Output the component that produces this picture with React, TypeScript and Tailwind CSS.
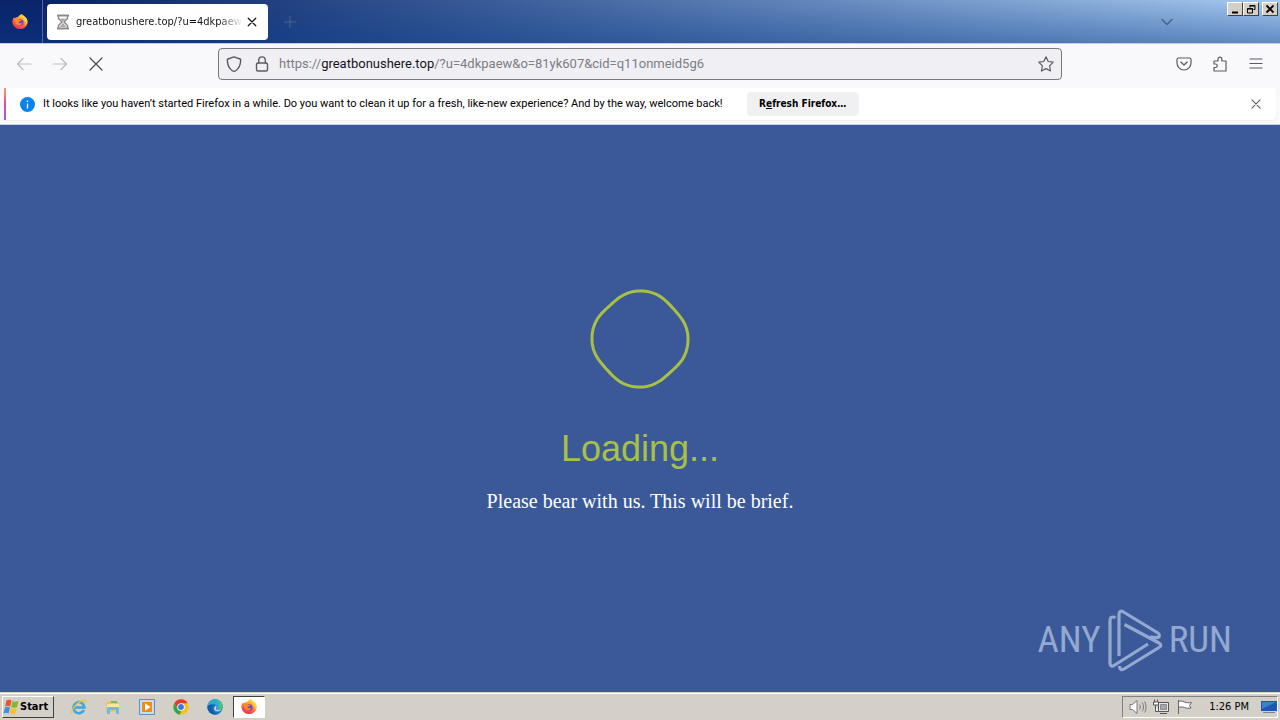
import type { ReactNode } from "react";

const FIREFOX_URL = {
  scheme: "https://",
  host: "greatbonushere.top",
  path: "/?u=4dkpaew&o=81yk607&cid=q11onmeid5g6",
};

// Closed wavy ring: four soft bulges with nearly straight stretches between
function ringPath(cx: number, cy: number) {
  const points: string[] = [];
  for (let deg = 0; deg < 360; deg += 3) {
    const t = (deg * Math.PI) / 180;
    const wave = t - 0.05;
    const r = 46.8 + 1.5 * Math.cos(4 * wave) - 0.25 * Math.cos(8 * wave);
    points.push(
      `${(cx + r * Math.cos(t)).toFixed(2)} ${(cy + r * Math.sin(t)).toFixed(2)}`
    );
  }
  return `M${points.join("L")}Z`;
}

function FirefoxIcon({ id }: { id: string }) {
  return (
    <svg className="size-4" viewBox="0 0 16 16" aria-hidden="true">
      <defs>
        <linearGradient id={id} x1="0.8" y1="0" x2="0.3" y2="1">
          <stop offset="0" stopColor="#fff04a" />
          <stop offset="0.35" stopColor="#ffa62b" />
          <stop offset="0.7" stopColor="#ff5a3d" />
          <stop offset="1" stopColor="#f0285a" />
        </linearGradient>
      </defs>
      <path
        d="M10.300 0c-.4 1 .2 1.900 1.200 2.700 .4-.2.900 0 1.400.4 1.900 1.300 2.800 3.300 2.800 5.300A7.700 7.500 0 0 1 .4 8.500C.3 6.500 1 4.600 2.200 3.300l.3 1.300 1-.9c.8-.5 1.500-.6 2.300-.5C6.800 1.600 8.500.5 10.300 0z"
        fill={`url(#${id})`}
      />
      <circle cx="8.300" cy="8.400" r="3.200" fill="#7a3fd0" />
      <path
        d="M2.800 5.600c1.700-.9 3.200-.6 4.600.4l2-.3c-.2 1-1 1.500-2.200 1.700-.8.2-.9.900-.4 1.500.9.8 2.300.2 3.400.3-.6 1.800-3 2.600-5 1.500C3.300 9.700 2.500 7.600 2.800 5.600z"
        fill="#ff8a1f"
      />
      <path
        d="M10 3c2.300 1.200 3 3.500 2.500 5.500 1-.6 1.300-1.500 1.300-2.500.6 2 .2 4-1.200 5.500 3-1.500 3.400-5 1.400-7.700L10.500.5z"
        fill="#ffd53d"
      />
    </svg>
  );
}

function LineIcon({
  children,
  className = "size-4",
}: {
  children: ReactNode;
  className?: string;
}) {
  return (
    <svg
      className={className}
      viewBox="0 0 16 16"
      fill="none"
      stroke="currentColor"
      strokeWidth="1.200"
      strokeLinecap="round"
      strokeLinejoin="round"
      aria-hidden="true"
    >
      {children}
    </svg>
  );
}

function TitleBar() {
  return (
    <header className="relative flex h-[43px] shrink-0 bg-linear-to-r from-[#0a246a] from-5% to-[#a6caf0]">
      <div className="absolute inset-0 bg-linear-to-b from-transparent to-[#0c3c8a]/45" />
      <div className="relative flex w-[43px] shrink-0 items-center justify-center border-r border-[#56699c] pr-0.5">
        <FirefoxIcon id="fx-title" />
      </div>
      <div className="relative mt-1 mb-[3px] ml-1 flex w-[221px] shrink-0 items-center rounded bg-white px-2 text-[#15141a]">
        <svg
          className="size-4 shrink-0"
          viewBox="0 0 16 16"
          fill="none"
          stroke="#8b8b8f"
          aria-hidden="true"
        >
          <path d="M2 1.500h12M2 14.500h12" strokeWidth="2" />
          <path
            d="M3.500 2v2.500L7 8l-3.500 3.500V14M12.500 2v2.500L9 8l3.500 3.500V14"
            strokeWidth="1.500"
          />
          <path d="M5 4.500h6L8 7.500zM8 9l3.500 4h-7z" fill="#a8a8ac" stroke="none" />
        </svg>
        <span className="ml-[5px] w-[167px] mask-r-from-85% text-[11px] leading-4 whitespace-nowrap">
          greatbonushere.top/?u=4dkpaew&amp;
        </span>
        <button aria-label="Close tab" className="shrink-0 pl-1">
          <LineIcon className="size-[10px]">
            <path d="M2 2l12 12M14 2L2 14" strokeWidth="2" />
          </LineIcon>
        </button>
      </div>
      <button aria-label="New tab" className="relative ml-3 px-1 text-[#53648d]">
        <LineIcon className="size-3">
          <path d="M8 0v16M0 8h16" />
        </LineIcon>
      </button>
      <div className="relative ml-auto flex">
        <button aria-label="List all tabs" className="mr-[52px] text-[#46648f]">
          <LineIcon>
            <path d="M3 5.500l5 5 5-5" strokeWidth="1.600" />
          </LineIcon>
        </button>
        <div className="mt-0.5 mr-0.5 flex h-[14px]">
          <WindowButton label="Minimize">
            <path d="M3 9.500h6" strokeWidth="2" />
          </WindowButton>
          <WindowButton label="Restore">
            <path d="M5 2.500h5v4H8.500M5 2v2.500M2.500 5.500h5v4.500h-5zM2.500 6h5M5 3h5" />
          </WindowButton>
          <span className="w-[3px]" />
          <WindowButton label="Close">
            <path d="M2.500 2.500l7 7M9.500 2.500l-7 7" strokeWidth="1.800" />
          </WindowButton>
        </div>
      </div>
    </header>
  );
}

function WindowButton({
  label,
  children,
}: {
  label: string;
  children: ReactNode;
}) {
  return (
    <button
      aria-label={label}
      className="flex h-[14px] w-4 items-center justify-center border border-t-white border-r-[#404040] border-b-[#404040] border-l-white bg-[#d4d0c8] text-black"
    >
      <svg
        className="size-3"
        viewBox="0 0 12 12"
        fill="none"
        stroke="currentColor"
        aria-hidden="true"
      >
        {children}
      </svg>
    </button>
  );
}

function Toolbar() {
  return (
    <nav className="flex h-[45px] shrink-0 items-center border-t border-[#c5cbdc] bg-[#f9f9fb] px-4 pb-1 text-[#5b5b66]">
      <div className="flex w-[202px] shrink-0 items-center gap-5">
        <button aria-label="Back" className="text-[#bdbdc3]">
          <LineIcon>
            <path d="M15 8H1.500M7 2.500L1.500 8 7 13.500" />
          </LineIcon>
        </button>
        <button aria-label="Forward" className="text-[#bdbdc3]">
          <LineIcon>
            <path d="M1 8h13.500M9 2.500l5.500 5.500L9 13.500" />
          </LineIcon>
        </button>
        <button aria-label="Stop" className="text-[#4a4a52]">
          <LineIcon>
            <path d="M2 2l12 12M14 2L2 14" />
          </LineIcon>
        </button>
      </div>
      <div className="flex h-8 flex-1 items-center rounded border border-[#77777f] bg-[#f0f0f4] px-[7px]">
        <LineIcon>
          <path
            d="M8 .8l6 2.200c.5.200.7.500.7.900-.1 4.500-1.700 8.600-5.200 10.900-1 .5-2 .5-3 0C3 12.500 1.400 8.400 1.300 3.900c0-.4.2-.7.700-.9z"
            strokeWidth="1.400"
          />
        </LineIcon>
        <LineIcon className="ml-3 size-4">
          <rect x="2.500" y="7" width="11" height="8" rx="1.500" strokeWidth="1.400" />
          <path d="M4.700 7V4.200a3.300 3.300 0 0 1 6.600 0V7" strokeWidth="1.400" />
        </LineIcon>
        <a
          href="#address"
          className="ml-[9px] flex-1 font-[Roboto,sans-serif] text-[13px] leading-4 whitespace-nowrap text-[#7c7c85]"
        >
          {FIREFOX_URL.scheme}
          <span className="text-[#15141a]">{FIREFOX_URL.host}</span>
          {FIREFOX_URL.path}
        </a>
        <button aria-label="Bookmark this page">
          <LineIcon>
            <path d="M8 .8l2.200 4.700 5 .7-3.600 3.600.9 5.200L8 12.600 3.500 15l.9-5.200L.8 6.200l5-.7z" />
          </LineIcon>
        </button>
      </div>
      <div className="ml-[114px] flex items-center gap-5">
        <button aria-label="Save to Pocket">
          <LineIcon>
            <path d="M2.500 2h11c.8 0 1.500.6 1.500 1.400V7A7 7 0 0 1 1 7V3.400C1 2.600 1.700 2 2.500 2z" />
            <path d="M4.800 6L8 9l3.200-3" />
          </LineIcon>
        </button>
        <button aria-label="Extensions">
          <LineIcon>
            <path d="M2 5h4V3a1.900 1.900 0 0 1 3.800 0v2H14v10H2v-3.500h1.500a1.700 1.700 0 0 0 0-3.500H2z" />
          </LineIcon>
        </button>
        <button aria-label="Open application menu">
          <LineIcon>
            <path d="M2 3h12M2 7.500h12M2 12h12" />
          </LineIcon>
        </button>
      </div>
    </nav>
  );
}

function NotificationBar() {
  return (
    <div className="shrink-0 border-b border-[#ccd0de] bg-[#f9f9fb] px-1 pb-1">
      <div className="flex h-8 items-center rounded-r bg-white shadow-xs">
        <span className="w-0.5 self-stretch bg-linear-to-b from-[#ff9a62] via-[#e84393] to-[#9059ff]" />
        <span className="ml-[14px] flex size-[15px] shrink-0 items-center justify-center rounded-full bg-[#0a84e8]">
          <svg className="size-[15px]" viewBox="0 0 15 15" aria-hidden="true">
            <path d="M7.500 6.500V11.500M7.500 3.500V5" stroke="#fff" strokeWidth="1.300" />
          </svg>
        </span>
        <p className="ml-2 font-[Roboto,sans-serif] text-[11px] leading-4 whitespace-nowrap text-black">
          It looks like you haven’t started Firefox in a while. Do you want to
          clean it up for a fresh, like-new experience? And by the way, welcome
          back!
        </p>
        <button className="ml-6 h-6 w-28 rounded bg-[#f0f0f2] text-[10px] leading-4 font-bold whitespace-nowrap text-black">
          R<span className="underline">e</span>fresh Firefox…
        </button>
        <button aria-label="Dismiss" className="mr-[15px] ml-auto text-[#5b5b66]">
          <LineIcon className="size-[10px]">
            <path d="M1.500 1.500l13 13M14.500 1.500l-13 13" strokeWidth="1.700" />
          </LineIcon>
        </button>
      </div>
    </div>
  );
}

function Watermark() {
  return (
    <div className="absolute right-12 bottom-5 flex h-16 items-center gap-1.5 font-['Roboto_Condensed','Liberation_Sans',sans-serif] text-[37px] leading-10 text-[#94a9d0]">
      <span>ANY</span>
      <svg
        className="h-16 w-14"
        viewBox="0 0 56 64"
        fill="none"
        stroke="currentColor"
        strokeWidth="3.200"
        aria-hidden="true"
      >
        <path d="M8.500 9.500C4 8 3 10 3 13v42c0 3 2 4 4 2.500L41 36" />
        <path d="M12 48V7c0-4 2-4.500 4.500-3L51 25c2 1.500 2 5-2 4.500L43 29" />
        <path d="M17.500 16.500L52 35c2.500 1.500 2.500 3 0 4.500L17 61c-2.500 1.500-4.500.5-4.500-3" />
      </svg>
      <span>RUN</span>
    </div>
  );
}

function QuickLaunch() {
  return (
    <div className="ml-[17px] flex items-center gap-[18px]">
      <button aria-label="Internet Explorer">
        <svg className="size-4" viewBox="0 0 16 16" fill="none" aria-hidden="true">
          <path
            d="M13 11A5.500 5.500 0 1 1 13.500 8.500H4"
            stroke="#3aa7e6"
            strokeWidth="2.600"
          />
          <path
            d="M1 14.500C-1 12 6 3 12 1.500c3-.8 3.500.5 2.500 2.500"
            stroke="#efc43a"
            strokeWidth="1.300"
          />
        </svg>
      </button>
      <button aria-label="Windows Explorer">
        <svg className="size-4" viewBox="0 0 16 16" aria-hidden="true">
          <path d="M1 3l5-1 1 1h6l1 2v8H1z" fill="#ecc65c" />
          <path d="M2 5h12v6H2z" fill="#f9e7a0" />
          <path d="M6 2h6v2H6z" fill="#74b978" />
          <path d="M2 15V9.500C2 8 3 8 4 8h8c1 0 2 0 2 1.500V15h-3v-4H5v4z" fill="#6fb9e8" />
        </svg>
      </button>
      <button aria-label="Media Player">
        <svg className="size-4" viewBox="0 0 16 16" aria-hidden="true">
          <path d="M.5.500h15v15H.5z" fill="#c5dcf2" stroke="#5b91c7" />
          <path d="M3 3h10v10H3z" fill="#f28c13" />
          <path d="M6 4.200L11.500 8 6 11.800z" fill="#fff" />
        </svg>
      </button>
      <button aria-label="Chrome">
        <svg className="size-4" viewBox="0 0 16 16" aria-hidden="true">
          <circle cx="8" cy="8" r="7.700" fill="#fbc116" />
          <path d="M1.300 4.200A7.700 7.700 0 0 1 14.700 4.200H8L4.700 10z" fill="#e33b2e" />
          <path d="M1.300 4.200L4.700 10c1 1.500 2 2 3.600 1.900l-1.400 3.700A7.700 7.700 0 0 1 1.300 4.200z" fill="#2da94f" />
          <circle cx="8" cy="8" r="3.800" fill="#fff" />
          <circle cx="8" cy="8" r="2.900" fill="#3b78e7" />
        </svg>
      </button>
      <button aria-label="Edge">
        <svg className="size-4" viewBox="0 0 16 16" aria-hidden="true">
          <circle cx="8" cy="8" r="7.700" fill="#1479c9" />
          <path d="M.4 7.500C1 3 4.200.3 8 .3c4.500 0 7.700 3.300 7.700 6.700 0 3-2.200 4.200-4.500 4.200-1.800 0-2.800-.6-2-1.700C10.500 7.500 9 5 6.200 5 3.500 5 1.200 6 .4 7.500z" fill="#2fa9cf" />
          <path d="M9 .4c4 .6 6.700 3.500 6.700 6.600 0 3-2.200 4.200-4.500 4.200 2.500-3 1.300-8-2.200-10.800z" fill="#4cc47e" />
          <path d="M6 6.500c-2 3.500.3 8 5.500 8.300C4.500 17 .2 12 .4 7.700 1.500 5.800 4.500 5 6 6.500z" fill="#125aa7" />
          <path d="M8.800 6.800c1 1 .5 2 .2 2.700-.7 1.500 2.500 2.500 5.500.8-1.500 3-6.500 2.800-7.200.2-.4-1.500.2-3 1.500-3.700z" fill="#d4d0c8" />
        </svg>
      </button>
    </div>
  );
}

function Taskbar() {
  return (
    <footer className="flex h-7 shrink-0 items-center border-t border-[#d4d0c8] bg-[#d4d0c8] px-0.5 pt-px text-black shadow-[inset_0_1px_0_#fff]">
      <button className="flex h-[22px] w-[52px] items-center border border-t-white border-r-[#404040] border-b-[#404040] border-l-white text-[11px] leading-4 font-bold">
        <svg className="h-4 w-[17px] shrink-0" viewBox="0 0 17 16" aria-hidden="true">
          <path d="M3.500 1.500c2-1.200 3.500-1 5 0L7.200 7.500c-1.700-1-3.200-1-5 0z" fill="#e8562a" />
          <path d="M9.500 2c2 1.200 3.600 1 6 0l-1.500 6c-2.500 1.100-4 1-5.800 0z" fill="#7fba2f" />
          <path d="M2 8.500c1.800-1 3.300-1 5 0l-1.400 6c-1.600-1-3.200-1-5.200 0z" fill="#3f8fdb" />
          <path d="M8 9c1.800 1 3.400 1.100 5.800 0l-1.400 5.500c-2 1.100-3.500 1-5.800 0z" fill="#f6c22c" />
        </svg>
        Start
      </button>
      <QuickLaunch />
      <button
        aria-label="Firefox"
        className="ml-[10px] flex h-[22px] w-8 items-center justify-center border border-t-[#404040] border-r-white border-b-white border-l-[#404040] bg-white"
      >
        <FirefoxIcon id="fx-task" />
      </button>
      <div className="ml-auto flex h-[22px] items-center border border-t-[#808080] border-r-white border-b-white border-l-[#808080] pl-1.5">
        <svg className="h-4 w-[18px]" viewBox="0 0 18 16" fill="none" stroke="#77777a" aria-hidden="true">
          <path d="M1 5.500h2.500L8 1.500v13l-4.500-4H1z" fill="#fff" />
          <path d="M10.500 5.500c1 1.500 1 3.500 0 5M13 3.500c2 2.500 2 6.500 0 9M15.500 2.500c2 3 2 8 0 11" />
        </svg>
        <svg className="ml-1.5 size-4" viewBox="0 0 16 16" fill="none" stroke="#55555a" aria-hidden="true">
          <path d="M5.500 3.500h10v9h-10z" fill="#e9e9e9" />
          <path d="M7.500 5.500h6v5h-6z" fill="#a9a9aa" stroke="#89898b" />
          <path d="M7 14.500h7M2.500 6v6.500H5M1.500.5V3M4.500.5V3M.5 3h5v3h-5z" fill="#fff" />
        </svg>
        <svg className="ml-2 size-4" viewBox="0 0 16 16" fill="#fff" stroke="#66666a" aria-hidden="true">
          <path d="M1.500 1v14M1.500 2.500c2.500-1 4-.5 6 .5 2 .8 4 1 7 .5l-2 3 1.500 2.500c-3 .5-4.500.3-6.500-.5-2-.7-4-.8-6 0z" />
        </svg>
        <time className="ml-4 text-[11px] leading-4 whitespace-nowrap">1:26 PM</time>
        <button aria-label="Show desktop" className="ml-3">
          <svg className="size-4" viewBox="0 0 16 16" aria-hidden="true">
            <path d="M0 2h16v10H0z" fill="#1d57b5" />
            <path d="M1 3h14L1 10z" fill="#3f7fd0" />
            <path d="M2 13h12v1H2z" fill="#7d8590" />
          </svg>
        </button>
      </div>
    </footer>
  );
}

export default function App() {
  return (
    <div className="flex min-h-screen flex-col overflow-hidden font-['DejaVu_Sans_Condensed','DejaVu_Sans',sans-serif]">
      <TitleBar />
      <Toolbar />
      <NotificationBar />
      <main className="relative flex flex-1 flex-col items-center justify-center bg-[#3b5998] pb-5">
        <svg
          className="size-28"
          viewBox="0 0 112 112"
          fill="none"
          stroke="#a9c046"
          strokeWidth="3"
          aria-label="Loading"
        >
          <path d={ringPath(56, 56)} />
        </svg>
        <h1 className="mt-8 font-['Liberation_Sans',sans-serif] text-[36px] leading-11 text-[#a9c046]">
          Loading...
        </h1>
        <p className="mt-4 font-['Liberation_Serif',serif] text-[20px] leading-7 text-white">
          Please bear with us. This will be brief.
        </p>
        <Watermark />
      </main>
      <Taskbar />
    </div>
  );
}
